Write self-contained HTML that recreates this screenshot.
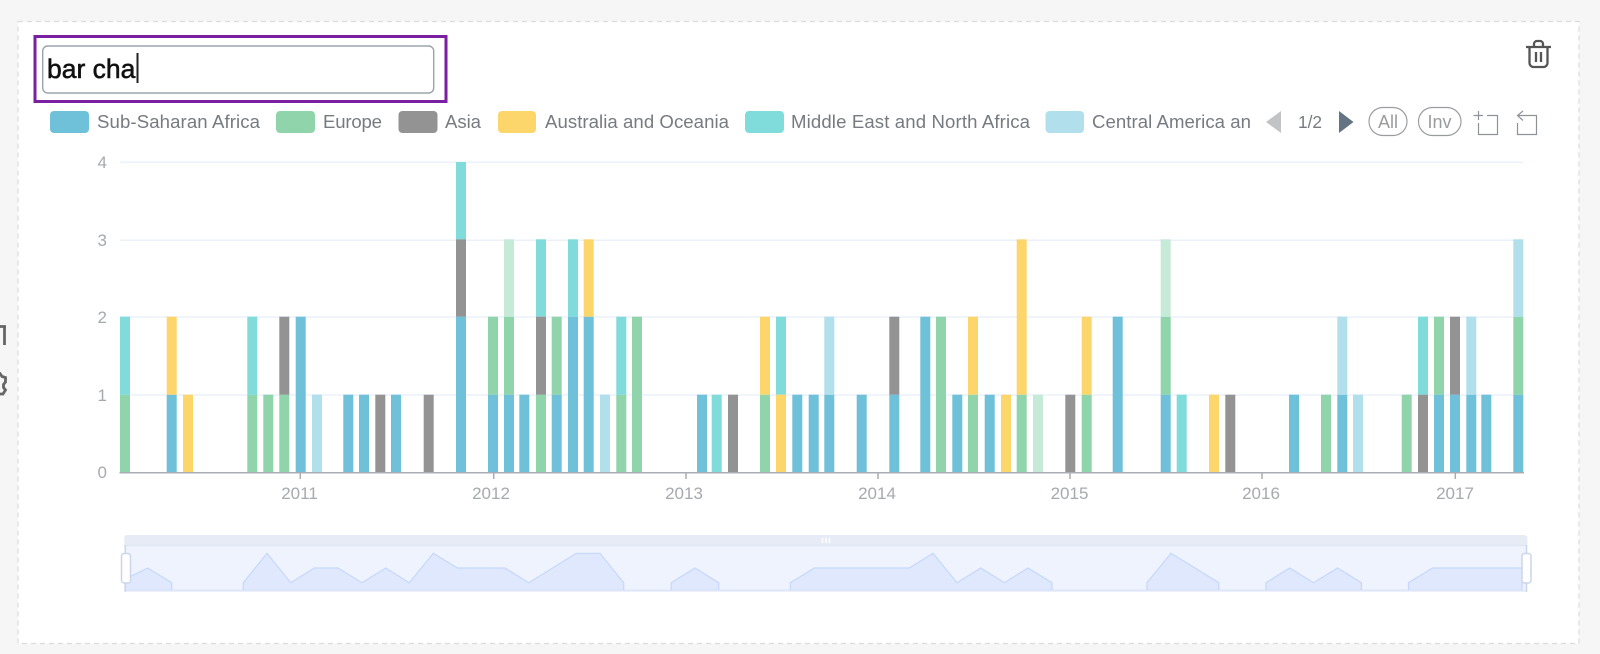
<!DOCTYPE html>
<html><head><meta charset="utf-8"><title>Bar chart</title>
<style>
html,body{margin:0;padding:0;background:#f6f6f6;width:1600px;height:654px;overflow:hidden}
svg{display:block;font-family:"Liberation Sans",sans-serif}
#bars rect{width:10px}
.a{y:394.7px;height:77.8px}.b{y:316.7px;height:78px}.c{y:239.3px;height:77.4px}.d{y:162px;height:77.3px}
.e{y:316.7px;height:155.8px}.f{y:239.3px;height:155.4px}
.lg{font-size:18.6px;fill:#777a80}
.ax{font-size:17px;fill:#a6a9ae}
.g{fill:none;stroke:#ebf0fa;stroke-width:1.5}
</style></head><body>
<svg width="1600" height="654" viewBox="0 0 1600 654" xmlns="http://www.w3.org/2000/svg">
<rect x="18" y="21.5" width="1561" height="622" fill="#fff" stroke="#dcdcdc" stroke-width="1.2" stroke-dasharray="5 4"/>

<!-- clipped left icons -->
<g fill="none" stroke="#666" stroke-width="2.8">
<path d="M-4 326.5H6M4.5 326.5V345"/>
<path d="M-3 372l3 1.5 2 3 3.5 1v4.500l-2 2.500v3l2 2.500-2.500 4-3 0-3 2"/>
</g>

<!-- search box -->
<rect x="35" y="36.5" width="411" height="65" fill="#fff" stroke="#7b1fa2" stroke-width="3"/>
<rect x="42.7" y="46" width="391" height="47" rx="5" fill="#fff" stroke="#9aa5ab" stroke-width="1.4"/>
<text x="47" y="78" font-size="26.5" fill="#111" stroke="#111" stroke-width=".55">bar cha</text>
<rect x="136.5" y="53" width="2" height="30" fill="#222"/>

<!-- trash -->
<g fill="none" stroke="#555" stroke-width="2.3">
<path d="M1526 47H1551"/>
<path d="M1534 47V44a3 3 0 0 1 3-3h3a3 3 0 0 1 3 3v3"/>
<path d="M1529.500 47V63a4 4 0 0 0 4 4h10a4 4 0 0 0 4-4V47"/>
<path d="M1536 52V62M1541 52V62"/>
</g>

<!-- legend -->
<rect x="50" y="111" width="39" height="22" rx="4" fill="#6fc1d9"/>
<text class="lg" x="97" y="128" textLength="163">Sub-Saharan Africa</text>
<rect x="276" y="111" width="39" height="22" rx="4" fill="#8fd4ab"/>
<text class="lg" x="323" y="128" textLength="59">Europe</text>
<rect x="398.5" y="111" width="39" height="22" rx="4" fill="#939393"/>
<text class="lg" x="445" y="128" textLength="36">Asia</text>
<rect x="498" y="111" width="38" height="22" rx="4" fill="#fdd66b"/>
<text class="lg" x="545" y="128" textLength="184">Australia and Oceania</text>
<rect x="745" y="111" width="39" height="22" rx="4" fill="#80dcdb"/>
<text class="lg" x="791" y="128" textLength="239">Middle East and North Africa</text>
<rect x="1045.5" y="111" width="38.5" height="22" rx="4" fill="#b1dfec"/>
<text class="lg" x="1092" y="128" textLength="159">Central America an</text>
<path d="M1281 111V133L1266 122Z" fill="#c2c3c4"/>
<text x="1298" y="128" font-size="17.300" fill="#777a80">1/2</text>
<path d="M1339 111V133L1353.500 122Z" fill="#647483"/>
<rect x="1369" y="107.500" width="38" height="28" rx="14" fill="none" stroke="#9a9c9f" stroke-width="1.2"/>
<text x="1378" y="128" font-size="18" fill="#9a9c9f">All</text>
<rect x="1418.500" y="107.500" width="42.500" height="28" rx="14" fill="none" stroke="#9a9c9f" stroke-width="1.2"/>
<text x="1427.500" y="128" font-size="18" fill="#9a9c9f">Inv</text>
<g fill="none" stroke="#8f9398" stroke-width="1.2">
<path d="M1473.500 115.500H1483M1478.500 111V120M1487 115.500H1497.500V134.500H1478.500V123"/>
<path d="M1537 115.500H1518.500M1523 111L1517.500 115.500L1523 120.500M1517.500 123V134.500H1536.500V115.500"/>
</g>

<!-- grid -->
<path class="g" d="M120 162.300H1523.500M120 240.300H1523.500M120 317H1523.500M120 395H1523.500"/>

<!-- bars -->
<g id="bars">
<g fill="#6fc1d9">
<rect class="a" x="166.700"/><rect class="a" x="343.300"/><rect class="a" x="359"/><rect class="a" x="391"/><rect class="a" x="488"/><rect class="a" x="504"/><rect class="a" x="519.300"/><rect class="a" x="551.700"/><rect class="a" x="697"/><rect class="a" x="792.300"/><rect class="a" x="808.700"/><rect class="a" x="824.300"/><rect class="a" x="856.700"/><rect class="a" x="889.300"/><rect class="a" x="952.300"/><rect class="a" x="984.700"/><rect class="a" x="1160.700"/><rect class="a" x="1289"/><rect class="a" x="1337.300"/><rect class="a" x="1434"/><rect class="a" x="1450"/><rect class="a" x="1466.300"/><rect class="a" x="1481.300"/><rect class="a" x="1513.300"/>
<rect class="e" x="295.700"/><rect class="e" x="456"/><rect class="e" x="568"/><rect class="e" x="583.700"/><rect class="e" x="920.300"/><rect class="e" x="1112.700"/>
</g>
<g fill="#8fd4ab">
<rect class="a" x="120"/><rect class="a" x="247.300"/><rect class="a" x="263.300"/><rect class="a" x="279.300"/><rect class="a" x="536"/><rect class="a" x="616.300"/><rect class="a" x="760"/><rect class="a" x="968"/><rect class="a" x="1016.700"/><rect class="a" x="1081.700"/><rect class="a" x="1321"/><rect class="a" x="1401.700"/>
<rect class="b" x="488"/><rect class="b" x="504"/><rect class="b" x="551.700"/><rect class="b" x="1160.700"/><rect class="b" x="1434"/><rect class="b" x="1513.300"/>
<rect class="e" x="632"/><rect class="e" x="936"/>
</g>
<g fill="#80dcdb">
<rect class="b" x="120"/><rect class="b" x="247.300"/><rect class="b" x="616.300"/><rect class="b" x="776"/><rect class="b" x="1418"/>
<rect class="a" x="711.700"/><rect class="a" x="1176.700"/>
<rect class="d" x="456"/>
<rect class="c" x="536"/><rect class="c" x="568"/>
</g>
<g fill="#939393">
<rect class="a" x="375.300"/><rect class="a" x="423.700"/><rect class="a" x="728"/><rect class="a" x="1065.300"/><rect class="a" x="1225.300"/><rect class="a" x="1418"/>
<rect class="b" x="279.300"/><rect class="b" x="536"/><rect class="b" x="889.300"/><rect class="b" x="1450"/>
<rect class="c" x="456"/>
</g>
<g fill="#fdd66b">
<rect class="b" x="166.700"/><rect class="b" x="760"/><rect class="b" x="968"/><rect class="b" x="1081.700"/>
<rect class="a" x="183"/><rect class="a" x="776"/><rect class="a" x="1001"/><rect class="a" x="1209"/>
<rect class="c" x="583.700"/>
<rect class="f" x="1016.700"/>
</g>
<g fill="#b1dfec">
<rect class="a" x="312"/><rect class="a" x="600"/><rect class="a" x="1353"/>
<rect class="b" x="824.300"/><rect class="b" x="1337.300"/><rect class="b" x="1466.300"/>
<rect class="c" x="1513.300"/>
</g>
<g fill="#c5ead7">
<rect class="c" x="504"/><rect class="c" x="1160.700"/>
<rect class="a" x="1033"/>
</g>
</g>

<!-- axes -->
<path d="M119.500 472.700H1524M300.300 472.700V479M493.700 472.700V479M686 472.700V479M878 472.700V479M1070 472.700V479M1262 472.700V479M1455.300 472.700V479" fill="none" stroke="#a9aeb5" stroke-width="1.5"/>
<g class="ax" text-anchor="end">
<text x="107" y="168">4</text><text x="107" y="246">3</text><text x="107" y="323">2</text><text x="107" y="401">1</text><text x="107" y="478">0</text>
</g>
<g class="ax" text-anchor="middle">
<text x="299.500" y="499">2011</text><text x="491" y="499">2012</text><text x="684" y="499">2013</text><text x="877" y="499">2014</text><text x="1069.500" y="499">2015</text><text x="1261" y="499">2016</text><text x="1455" y="499">2017</text>
</g>

<!-- data zoom -->
<path d="M124.300 545.700V538a3 3 0 0 1 3-3H1524.400a3 3 0 0 1 3 3V545.700Z" fill="#e6ebf6"/>
<rect x="124.300" y="545.700" width="1403" height="46" fill="#eef3fe"/>
<path d="M125 579L147.700 568L171.700 582.700V590.300H243.300V582.700L267 553.300L290.700 582.700L314.300 568H338L362 582.700L385.700 568L409.300 582.700L433.300 553.300L457.300 568H505L528.700 582.700L576.300 553.300H600L623.700 582.700V590.300H671.300V582.700L695 568L718.700 582.700V590.300H790.300V582.700L814.300 568H909.300L933 553.300L957 582.700L980.700 568L1004.300 582.700L1028 568L1052 582.700V590.300H1147V582.700L1171 553.300L1218.800 582.700V590.300H1266V582.700L1289.700 568L1313.500 582.700L1337.600 568L1361.400 582.700V590.300H1408.500V582.700L1432.600 568H1522V590.300H125Z" fill="#dfe8fc" stroke="#c5d8fb" stroke-width="1.2"/>
<path d="M124.300 545.700H1527.300" stroke="#dfe6f6" stroke-width="1.2" fill="none"/>
<path d="M124.300 590.800H1527.300" stroke="#e0e6f8" stroke-width="1.5" fill="none"/>
<path d="M125.300 545V591.700M1526.500 545V591.700" stroke="#ccd6ea" stroke-width="1.5" fill="none"/>
<rect x="121.500" y="553.500" width="9" height="29.500" rx="2.500" fill="#fff" stroke="#ccd6ea" stroke-width="1.5"/>
<rect x="1522" y="553.500" width="9" height="29.500" rx="2.500" fill="#fff" stroke="#ccd6ea" stroke-width="1.5"/>
<path d="M822.500 537.700V543M826 537.700V543M829.500 537.700V543" stroke="#fff" stroke-width="1.5" fill="none"/>
</svg>
</body></html>
